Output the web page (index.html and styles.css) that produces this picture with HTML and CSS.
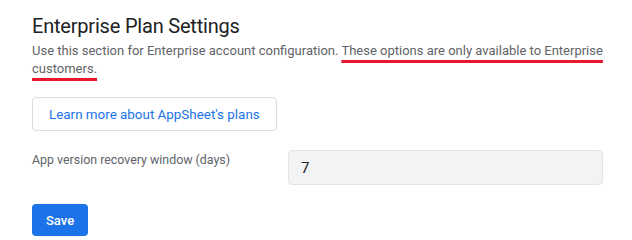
FILE: index.html
```html
<!DOCTYPE html>
<html lang="en">
<head>
<meta charset="utf-8">
<title>Enterprise Plan Settings</title>
<link rel="stylesheet" href="styles.css">
</head>
<body>
<main class="settings">
  <h1 class="settings-title">Enterprise Plan Settings</h1>
  <p class="settings-desc">Use this section for Enterprise account configuration. <span class="mark">These options are only available to Enterprise</span> <span class="mark">customers.</span></p>
  <button class="btn-outline" type="button">Learn more about AppSheet's plans</button>
  <div class="field-row">
    <label class="field-label" for="recovery">App version recovery window (days)</label>
    <input class="field-input" id="recovery" type="text" value="7">
  </div>
  <button class="btn-primary" type="button">Save</button>
</main>
</body>
</html>
```
FILE: styles.css
```css
html, body {
  margin: 0;
  padding: 0;
  background: #ffffff;
}

body {
  font-family: Roboto, "Liberation Sans", Arial, sans-serif;
  color: #202124;
}

.settings {
  display: flex;
  flex-direction: column;
  align-items: flex-start;
  padding: 12px 29px 0 32px;
  width: 571px;
}

.settings-title {
  margin: 0;
  font-size: 20px;
  line-height: 28px;
  font-weight: 400;
  letter-spacing: -0.2px;
  color: #202124;
}

.settings-desc {
  margin: 2px 0 0 0;
  font-size: 13px;
  line-height: 18px;
  color: #5f6368;
}

.mark {
  text-decoration: underline;
  text-decoration-color: #e8192c;
  text-decoration-thickness: 3px;
  text-underline-offset: 5px;
  text-decoration-skip-ink: none;
}

.btn-outline {
  margin-top: 19px;
  height: 34px;
  padding: 0 16px;
  background: #ffffff;
  border: 1px solid #dadce0;
  border-radius: 4px;
  font-family: inherit;
  font-size: 13.4px;
  font-weight: 400;
  color: #1a73e8;
  cursor: pointer;
}

.field-row {
  margin-top: 19px;
  display: flex;
  align-items: flex-start;
  width: 100%;
}

.field-label {
  width: 256px;
  flex: 0 0 256px;
  padding-top: 1px;
  font-size: 12.4px;
  line-height: 18px;
  color: #5f6368;
}

.field-input {
  flex: 1 1 auto;
  box-sizing: border-box;
  height: 35px;
  padding: 0 12px;
  background: #f1f3f4;
  border: 1px solid #e3e4e6;
  border-radius: 4px;
  font-family: inherit;
  font-size: 15px;
  color: #202124;
  outline: none;
}

.btn-primary {
  margin-top: 19px;
  height: 32px;
  padding: 0 14px;
  background: #1a73e8;
  border: none;
  border-radius: 4px;
  font-family: inherit;
  font-size: 13px;
  font-weight: 500;
  color: #ffffff;
  cursor: pointer;
}
```
